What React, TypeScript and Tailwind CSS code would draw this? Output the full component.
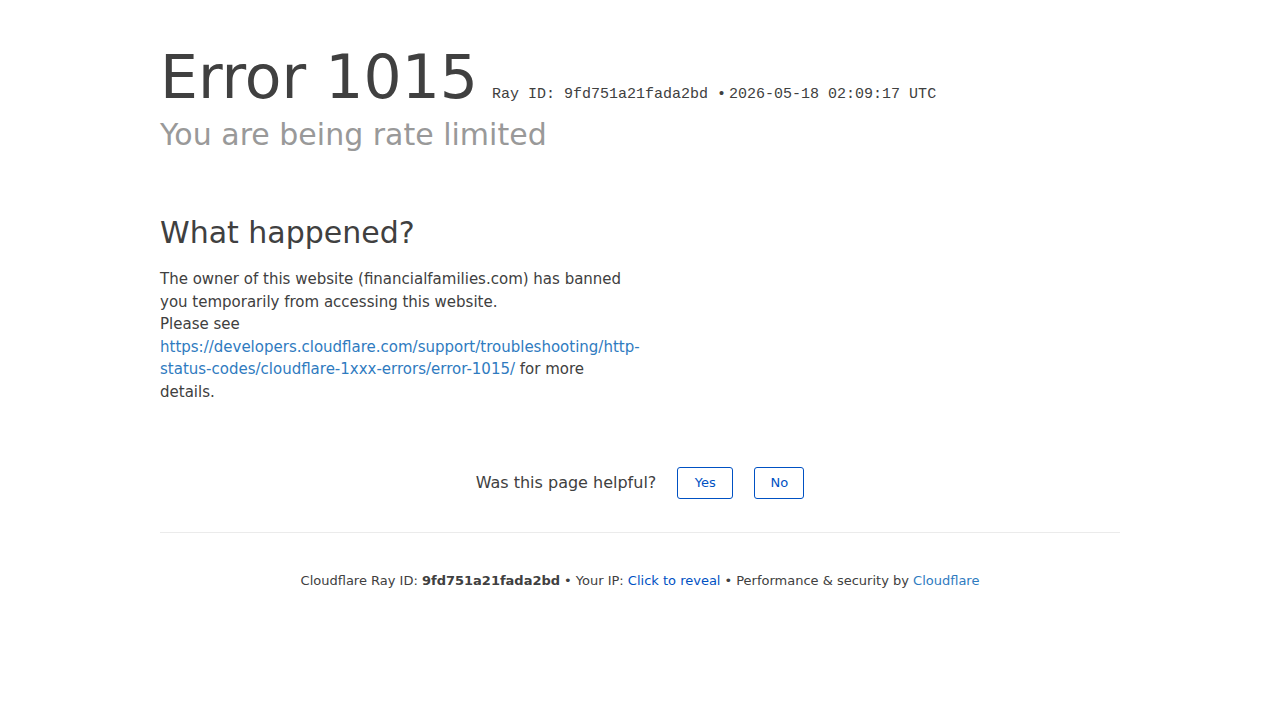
import React from "react";

const sans = { fontFamily: '"DejaVu Sans", sans-serif' };

export default function App() {
  return (
    <div className="min-h-[720px] bg-white" style={sans}>
      <div className="mx-auto w-[960px] pt-[47px]">
        <header>
          <div className="flex items-baseline">
            <h1 className="text-[60px] leading-[60px] text-[#404040]">Error 1015</h1>
            <span className="ml-[14px] font-['Liberation_Mono',monospace] text-[15px] text-[#404040]">
              Ray ID: 9fd751a21fada2bd
              <span className="ml-[9px] mr-[3px]">•</span>
              2026-05-18 02:09:17 UTC
            </span>
          </div>
          <h2 className="mt-[13px] text-[30px] leading-[30px] text-[#999999]">You are being rate limited</h2>
        </header>

        <section className="mt-[68px] w-[480px]">
          <h2 className="text-[30px] leading-[30px] text-[#404040]">What happened?</h2>
          <p className="mt-[20px] text-[15px] leading-[22.5px] text-[#404040]">
            The owner of this website (financialfamilies.com) has banned you temporarily from accessing this website.
            <br />
            Please see{" "}
            <a href="#" className="text-[#2f7bbf]">
              https://developers.cloudflare.com/support/troubleshooting/http-status-codes/cloudflare-1xxx-errors/error-1015/
            </a>{" "}
            for more details.
          </p>
        </section>

        <div className="mt-[64px] flex items-center justify-center">
          <span className="text-[16px] text-[#404040]">Was this page helpful?</span>
          <button className="ml-[21px] h-[32px] w-[56px] rounded-[3px] border border-[#0051c3] text-[13px] text-[#0051c3]">
            Yes
          </button>
          <button className="ml-[21px] h-[32px] w-[50px] rounded-[3px] border border-[#0051c3] text-[13px] text-[#0051c3]">
            No
          </button>
        </div>

        <footer className="mt-[33px] border-t border-[#ebebeb] pt-[38px] text-center text-[13px] text-[#404040]">
          <span>
            Cloudflare Ray ID: <strong className="font-bold">9fd751a21fada2bd</strong>
          </span>
          <span className="mx-[4px]">•</span>
          <span>
            Your IP: <a href="#" className="text-[#0051c3]">Click to reveal</a>
          </span>
          <span className="mx-[4px]">•</span>
          <span>Performance &amp; security by </span>
          <a href="#" className="text-[#2f7bbf]">Cloudflare</a>
        </footer>
      </div>
    </div>
  );
}
